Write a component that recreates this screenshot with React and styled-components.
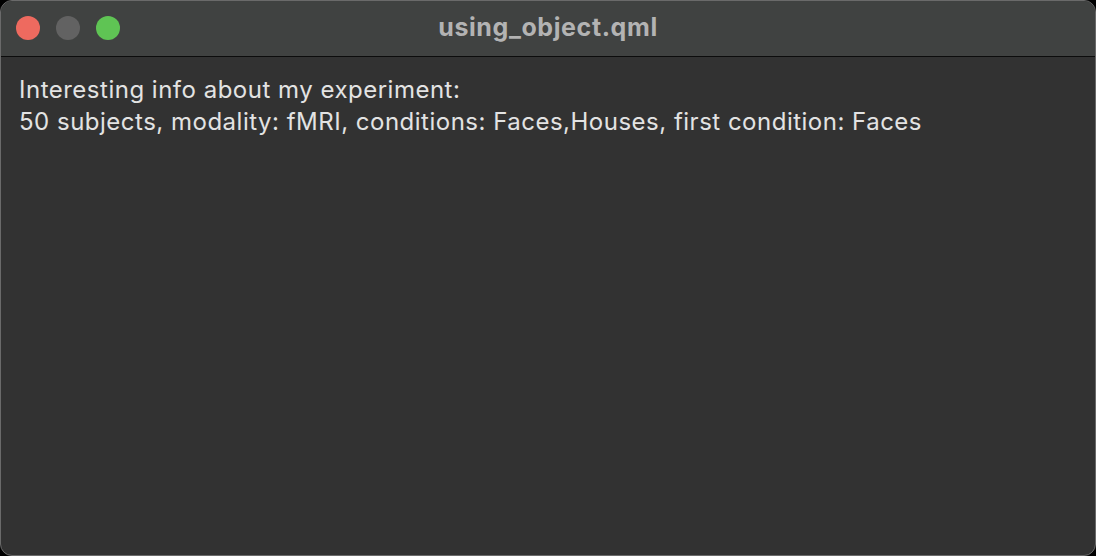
import React from "react";
import styled, { createGlobalStyle } from "styled-components";

const GlobalStyle = createGlobalStyle`
  html, body {
    margin: 0;
    padding: 0;
    background: #000;
  }
  #root {
    width: 1096px;
    height: 556px;
  }
`;

const Window = styled.div`
  box-sizing: border-box;
  width: 1096px;
  height: 556px;
  display: flex;
  flex-direction: column;
  border-radius: 12px;
  border: 1px solid #6a6a6a;
  overflow: hidden;
  background: #323232;
  font-family: Inter, "Noto Sans", sans-serif;
`;

const TitleBar = styled.div`
  position: relative;
  height: 55px;
  flex-shrink: 0;
  display: flex;
  align-items: center;
  justify-content: center;
  background: #404241;
  border-bottom: 1px solid #0c0c0c;
`;

const Lights = styled.div`
  position: absolute;
  left: 15px;
  top: 15px;
  display: flex;
  gap: 16px;
`;

const Light = styled.span`
  width: 24px;
  height: 24px;
  border-radius: 50%;
  background: ${(p) => p.color};
`;

const Title = styled.h1`
  margin: 0 0 3px 0;
  font-size: 25px;
  font-weight: 700;
  color: #b3b3b3;
  letter-spacing: 0.6px;
`;

const Content = styled.div`
  flex: 1;
  padding: 17px 18px;
  color: #e3e3e3;
  font-size: 24px;
  line-height: 32px;
  letter-spacing: 0.5px;
`;

const Line = styled.div``;

export default function App() {
  return (
    <>
      <GlobalStyle />
      <Window>
        <TitleBar>
          <Lights>
            <Light color="#ee6a5f" />
            <Light color="#626262" />
            <Light color="#5fc454" />
          </Lights>
          <Title>using_object.qml</Title>
        </TitleBar>
        <Content>
          <Line>Interesting info about my experiment:</Line>
          <Line>
            50 subjects, modality: fMRI, conditions: Faces,Houses, first
            condition: Faces
          </Line>
        </Content>
      </Window>
    </>
  );
}
